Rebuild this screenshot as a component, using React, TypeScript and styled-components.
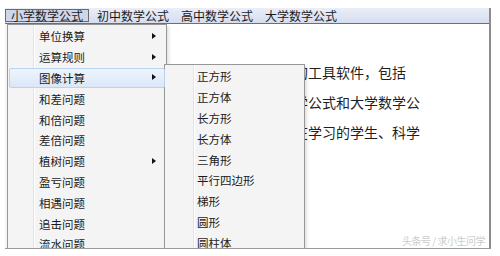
import React from "react";
import styled, { createGlobalStyle } from "styled-components";

const Global = createGlobalStyle`
  html, body { margin: 0; padding: 0; background: #ffffff; }
  body { font-family: "Noto Sans CJK SC", "Noto Sans", sans-serif; color: #1b1b1b; }
`;

const Page = styled.div`
  width: 500px;
  height: 256px;
  padding: 8px 0 0 5px;
  box-sizing: border-box;
  background: #fff;
`;

const Window = styled.div`
  position: relative;
  width: 486px;
  height: 241px;
  box-sizing: border-box;
  border-right: 2px solid #8c8c8c;
  border-bottom: 1px solid #9a9a9a;
  overflow: hidden;
  display: flex;
  flex-direction: column;
  background: #fff;
`;

const MenuBar = styled.div`
  height: 15px;
  flex: none;
  display: flex;
  align-items: center;
  background: linear-gradient(#eaeef8, #d6ddef);
  border-bottom: 1px solid #6f6f6f;
  font-size: 12px;
  line-height: 14px;
`;

const BarItem = styled.div<{ $active?: boolean }>`
  height: 13px;
  padding: 0 5px;
  margin-right: ${(p) => (p.$active ? "2px" : "0")};
  display: flex;
  align-items: center;
  white-space: nowrap;
  box-sizing: border-box;
  border: 1px solid ${(p) => (p.$active ? "#6b6b6b" : "transparent")};
  background: ${(p) => (p.$active ? "#cfd6e8" : "transparent")};
`;

const Body = styled.div`
  flex: 1;
  display: flex;
`;

const Sidebar = styled.div`
  width: 161px;
  flex: none;
  background: #f4f4f4;
`;

const Content = styled.div`
  flex: 1;
  padding: 33px 0 0 16px;
  font-size: 14px;
  line-height: 30px;
  color: #1f1f1f;
  white-space: nowrap;
`;

const Line = styled.div``;

const Menu = styled.div<{ $left: number; $top: number; $width: number; $gutter: number }>`
  position: absolute;
  left: ${(p) => p.$left}px;
  top: ${(p) => p.$top}px;
  width: ${(p) => p.$width}px;
  box-sizing: border-box;
  padding: 1px;
  border: 1px solid #979797;
  background: #f4f4f4;
  font-size: 11.5px;
  box-shadow: 2px 2px 3px rgba(0, 0, 0, 0.12);
  &::before {
    content: "";
    position: absolute;
    top: 0;
    bottom: 0;
    left: ${(p) => p.$gutter}px;
    width: 1px;
    background: #e2e3e3;
    box-shadow: 1px 0 0 #ffffff;
  }
`;

const Item = styled.div<{ $hot?: boolean; $indent: number }>`
  position: relative;
  z-index: 1;
  height: 20.8px;
  display: flex;
  align-items: center;
  box-sizing: border-box;
  padding-left: ${(p) => p.$indent}px;
  border: 1px solid ${(p) => (p.$hot ? "#b9d3f1" : "transparent")};
  border-radius: 2px;
  background: ${(p) => (p.$hot ? "linear-gradient(#eef4fc, #dbe7f7)" : "transparent")};
  white-space: nowrap;
`;

const Arrow = styled.span`
  position: absolute;
  right: 8px;
  top: 50%;
  margin-top: -3.5px;
  width: 0;
  height: 0;
  border-top: 3.5px solid transparent;
  border-bottom: 3.5px solid transparent;
  border-left: 4px solid #111;
`;

const Watermark = styled.div`
  position: absolute;
  right: 4px;
  bottom: 0;
  font-size: 10px;
  color: #cbcbcb;
  letter-spacing: -0.5px;
`;

const mainItems: { label: string; sub?: boolean }[] = [
  { label: "单位换算", sub: true },
  { label: "运算规则", sub: true },
  { label: "图像计算", sub: true },
  { label: "和差问题" },
  { label: "和倍问题" },
  { label: "差倍问题" },
  { label: "植树问题", sub: true },
  { label: "盈亏问题" },
  { label: "相遇问题" },
  { label: "追击问题" },
  { label: "流水问题" },
];

const subItems = ["正方形", "正方体", "长方形", "长方体", "三角形", "平行四边形", "梯形", "圆形", "圆柱体"];

export default function App() {
  return (
    <Page>
      <Global />
      <Window>
        <MenuBar>
          <BarItem $active>小学数学公式</BarItem>
          <BarItem>初中数学公式</BarItem>
          <BarItem>高中数学公式</BarItem>
          <BarItem>大学数学公式</BarItem>
        </MenuBar>
        <Body>
          <Sidebar />
          <Content>
            <Line>这是一款非常实用的工具软件，包括</Line>
            <Line>小学初中、高中数学公式和大学数学公</Line>
            <Line>式，非常适合于正在学习的学生、科学</Line>
          </Content>
        </Body>
        <Menu $left={2} $top={16} $width={160} $gutter={25}>
          {mainItems.map((m) => (
            <Item key={m.label} $indent={29} $hot={m.label === "图像计算"}>
              {m.label}
              {m.sub && <Arrow />}
            </Item>
          ))}
        </Menu>
        <Menu $left={159} $top={56} $width={141} $gutter={28}>
          {subItems.map((s) => (
            <Item key={s} $indent={30}>
              {s}
            </Item>
          ))}
        </Menu>
        <Watermark>头条号 / 求小生问学</Watermark>
      </Window>
    </Page>
  );
}
